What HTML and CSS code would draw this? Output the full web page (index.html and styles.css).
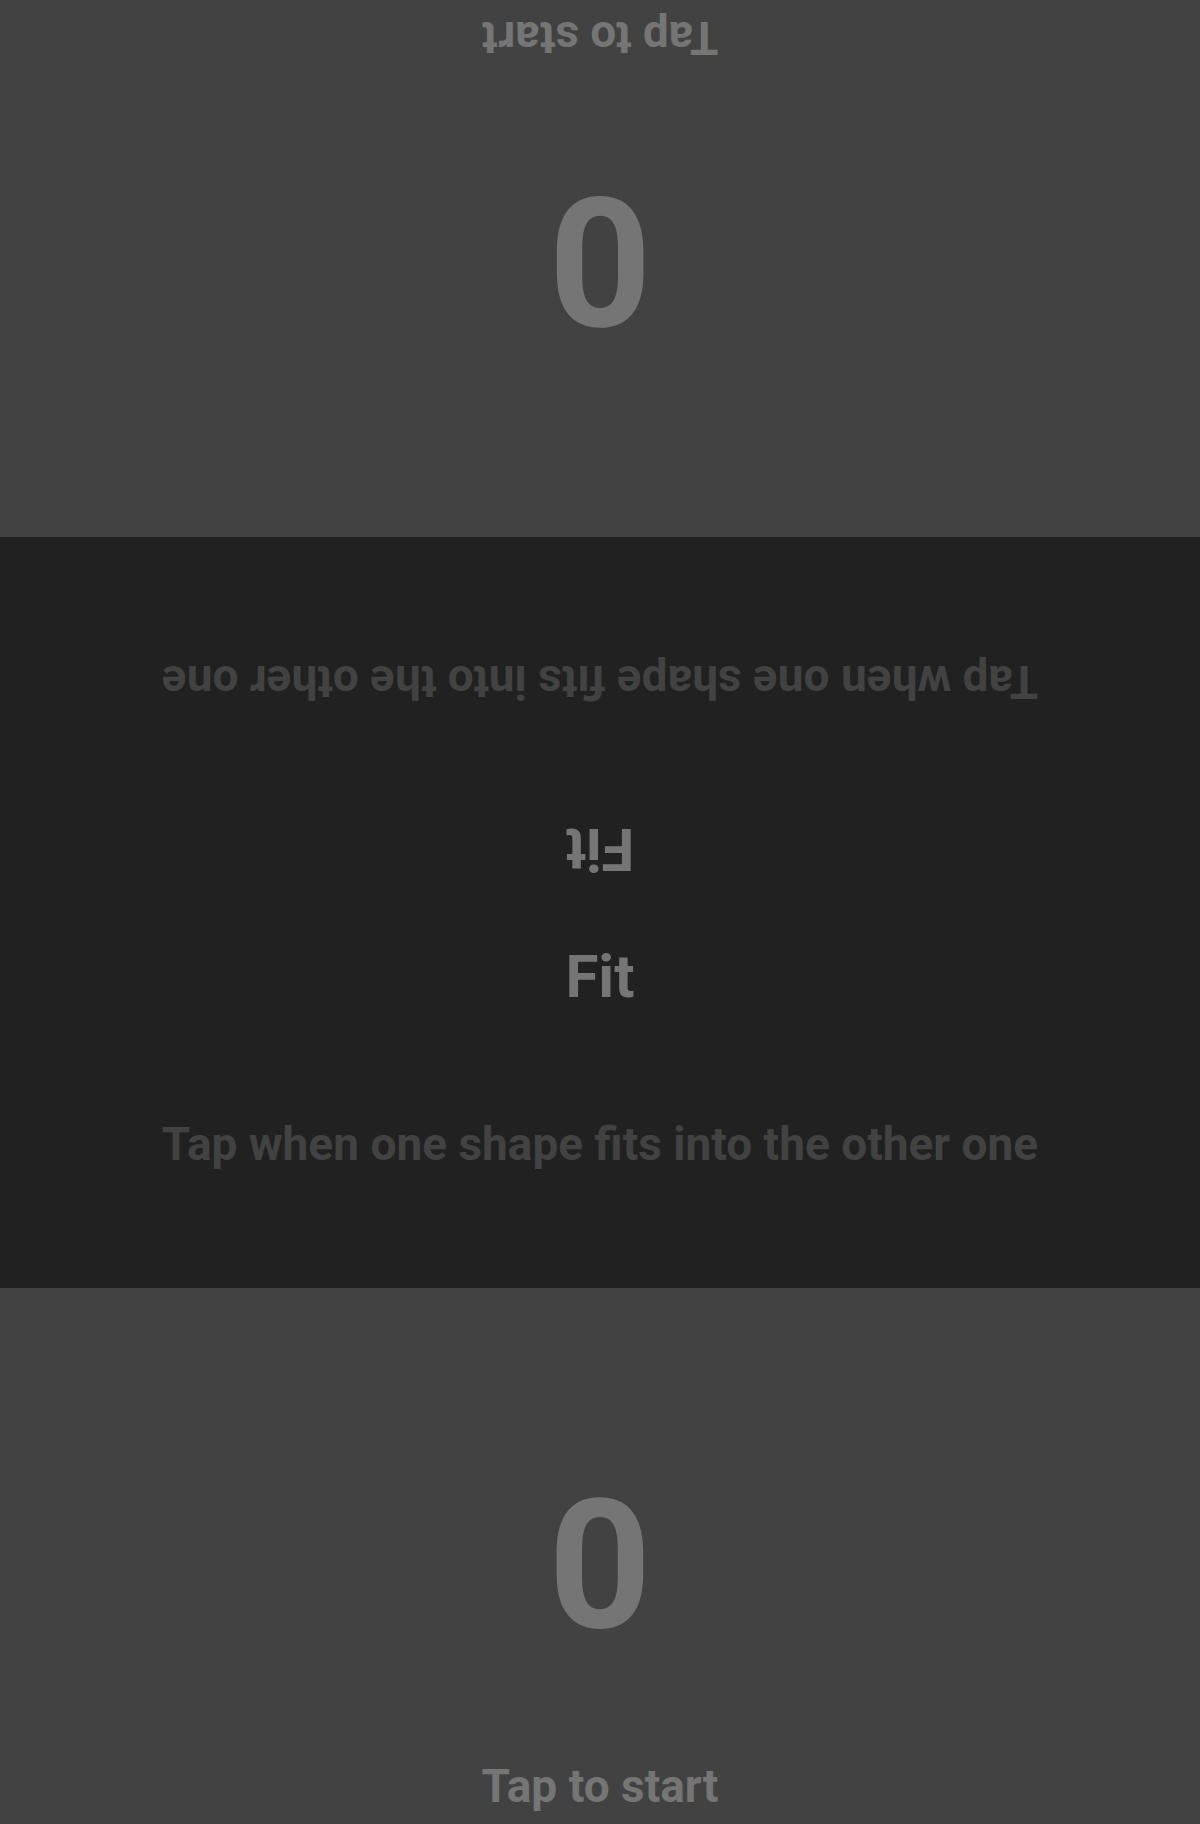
FILE: index.html
```html
<!DOCTYPE html>
<html lang="en">
<head>
<meta charset="utf-8">
<title>Fit</title>
<link rel="stylesheet" href="styles.css">
</head>
<body>
<div class="app">
  <section class="player player--flipped">
    <div class="score">0</div>
    <div class="hint">Tap to start</div>
  </section>
  <section class="board">
    <div class="half half--flipped">
      <div class="title">Fit</div>
      <div class="instruction">Tap when one shape fits into the other one</div>
    </div>
    <div class="half">
      <div class="title">Fit</div>
      <div class="instruction">Tap when one shape fits into the other one</div>
    </div>
  </section>
  <section class="player">
    <div class="score">0</div>
    <div class="hint">Tap to start</div>
  </section>
</div>
</body>
</html>
```

FILE: styles.css
```css
html, body {
  margin: 0;
  padding: 0;
}
body {
  font-family: Roboto, "Liberation Sans", Arial, sans-serif;
  font-weight: 700;
  background: #212121;
}
.app {
  width: 1200px;
  height: 1824px;
  display: flex;
  flex-direction: column;
}
.player {
  height: 536px;
  flex: none;
  background: #424242;
  color: #757575;
  display: flex;
  flex-direction: column;
  align-items: center;
}
.player--flipped {
  height: 537px;
  transform: rotate(180deg);
}
.score {
  font-size: 180px;
  line-height: 1;
  margin-top: 188px;
}
.hint {
  font-size: 46px;
  line-height: 1;
  margin-top: auto;
  margin-bottom: 15px;
}
.board {
  flex: 1;
  background: #212121;
  display: flex;
  flex-direction: column;
}
.half {
  flex: 1;
  display: flex;
  flex-direction: column;
  align-items: center;
}
.half--flipped {
  transform: rotate(180deg);
}
.title {
  font-size: 60px;
  line-height: 1;
  margin-top: 34px;
  color: #757575;
}
.instruction {
  font-size: 46px;
  line-height: 1;
  margin-top: 114px;
  color: #424242;
}
```
